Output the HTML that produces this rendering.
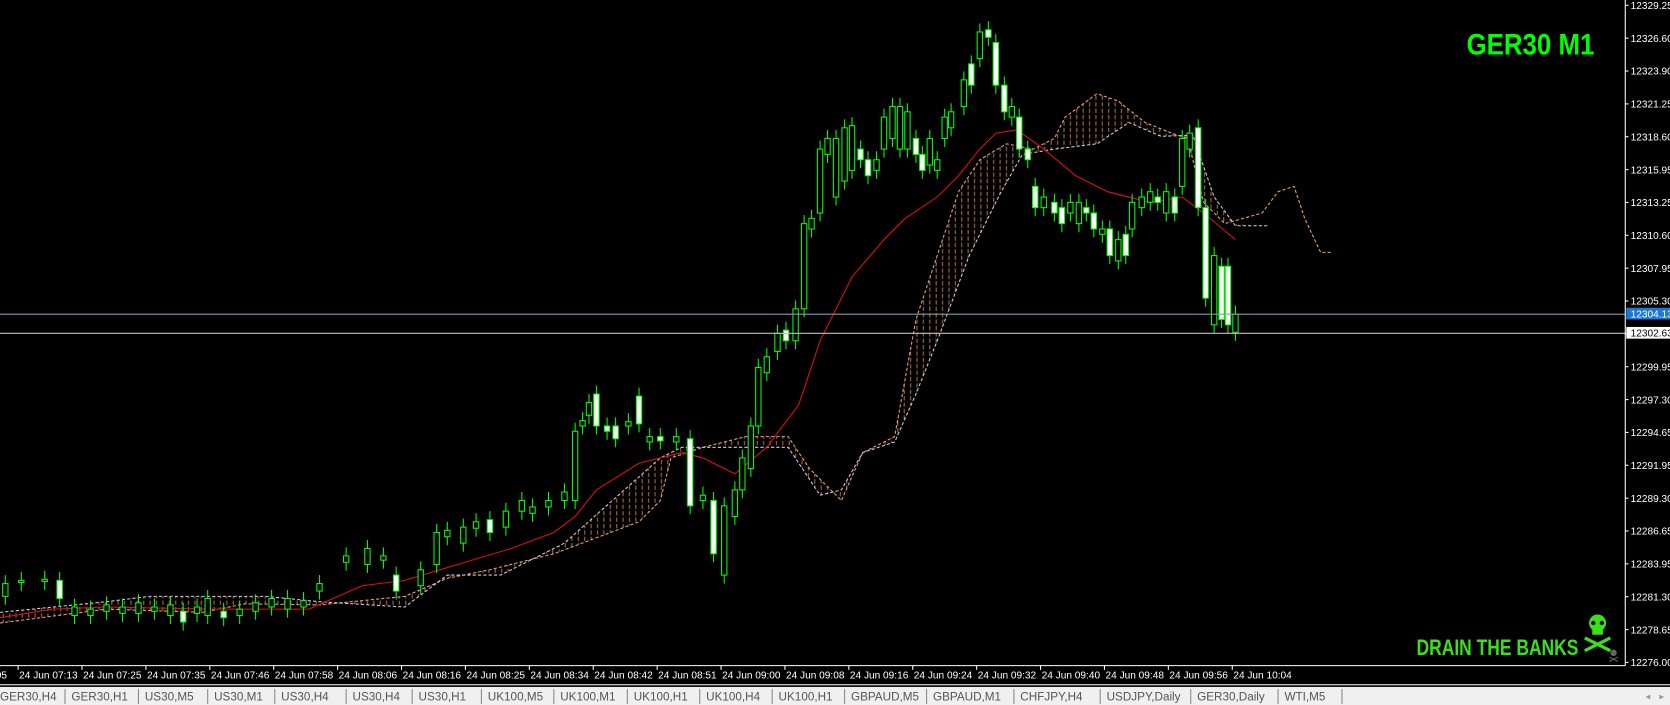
<!DOCTYPE html>
<html><head><meta charset="utf-8"><style>
html,body{margin:0;padding:0;background:#000;overflow:hidden}
svg{display:block}
text{font-family:"Liberation Sans",sans-serif}
</style></head><body>
<svg id="s" width="1670" height="705" viewBox="0 0 1568 662" preserveAspectRatio="none" xmlns="http://www.w3.org/2000/svg">
<defs>
<pattern id="ho" width="6" height="6" patternUnits="userSpaceOnUse"><line x1="3" y1="0" x2="3" y2="4" stroke="#e8a070" stroke-width="1"/></pattern>
<clipPath id="cc"><rect x="0" y="0" width="1526" height="625"/></clipPath>
</defs>
<rect width="1568" height="662" fill="#000"/>
<g id="cloud" clip-path="url(#cc)"></g>
<g id="candles" clip-path="url(#cc)"></g>
<line x1="0" y1="295" x2="1526" y2="295" stroke="#8899aa" stroke-width="1"/>
<line x1="0" y1="313" x2="1526" y2="313" stroke="#c0c0c0" stroke-width="1"/>
<line x1="1526" y1="0" x2="1526" y2="625" stroke="#fff" stroke-width="1"/>
<line x1="0" y1="625" x2="1526" y2="625" stroke="#fff" stroke-width="1"/>
<g id="axis" fill="#fff" font-size="9.5"></g>
<rect x="1527" y="289" width="41" height="11" fill="#1e78d2"/>
<text x="1531" y="298" font-size="9.5" fill="#fff">12304.13</text>
<rect x="1527" y="307" width="41" height="11" fill="#fff"/>
<text x="1531" y="316" font-size="9.5" fill="#000">12302.63</text>
<text x="1377" y="51" font-size="28" font-weight="bold" fill="#00ff00" textLength="120" lengthAdjust="spacingAndGlyphs">GER30 M1</text>
<text x="1330" y="615" font-size="21" font-weight="bold" fill="#3ce01a" textLength="152" lengthAdjust="spacingAndGlyphs">DRAIN THE BANKS</text>
<g fill="#3ce01a">
<ellipse cx="1500" cy="585" rx="8" ry="8"/>
<rect x="1495" y="590" width="10" height="6"/>
<line x1="1488" y1="599" x2="1512" y2="611" stroke="#3ce01a" stroke-width="3"/>
<line x1="1512" y1="599" x2="1488" y2="611" stroke="#3ce01a" stroke-width="3"/>
<circle cx="1496" cy="585" r="2" fill="#000"/><circle cx="1504" cy="585" r="2" fill="#000"/>
</g>
<g fill="#666"><circle cx="1515" cy="613" r="3"/><line x1="1511" y1="617" x2="1519" y2="621" stroke="#666"/><line x1="1519" y1="617" x2="1511" y2="621" stroke="#666"/></g>
<line x1="0" y1="643" x2="1568" y2="643" stroke="#fff" stroke-width="1"/>
<rect x="0" y="645" width="1568" height="17" fill="#f0f0f0"/>
<g id="tabs" font-size="11" fill="#555"></g>
<text x="1545" y="657" font-size="9" fill="#999">◂</text><text x="1558" y="657" font-size="9" fill="#999">▸</text>
</svg>
<script>
var NS="http://www.w3.org/2000/svg";
function el(p,n,a,t){var e=document.createElementNS(NS,n);for(var k in a)e.setAttribute(k,a[k]);if(t)e.textContent=t;document.getElementById(p).appendChild(e);return e;}
// price axis
var pr=["12329.25","12326.60","12323.90","12321.25","12318.60","12315.95","12313.25","12310.60","12307.95","12305.30",null,"12299.95","12297.30","12294.65","12291.95","12289.30","12286.65","12283.95","12281.30","12278.65","12276.00"];
for(var i=0;i<pr.length;i++){var y=5+i*30.85;if(pr[i]){el("axis","text",{x:1531,y:y+3.5},pr[i]);}el("axis","line",{x1:1526,x2:1529,y1:y,y2:y,stroke:"#fff"});}
// time axis
var tl=["07:13","07:25","07:35","07:46","07:58","08:06","08:16","08:25","08:34","08:42","08:51","09:00","09:08","09:16","09:24","09:32","09:40","09:48","09:56","10:04"];
el("axis","text",{x:-4,y:637},"05");
for(var i=0;i<tl.length;i++){var x=17+i*60;el("axis","text",{x:x+1,y:637},"24 Jun "+tl[i]);el("axis","line",{x1:x,x2:x,y1:625,y2:629,stroke:"#fff"});}
// tabs
var tb=["GER30,H4","GER30,H1","US30,M5","US30,M1","US30,H4","US30,H4","US30,H1","UK100,M5","UK100,M1","UK100,H1","UK100,H4","UK100,H1","GBPAUD,M5","GBPAUD,M1","CHFJPY,H4","USDJPY,Daily","GER30,Daily","WTI,M5"];
var sp=[0,61,130,195,258,325,387,452,520,589,657,725,793,870,952,1033,1118,1200,1260];
for(var i=0;i<tb.length;i++){el("tabs","text",{x:sp[i]+(i?6:0),y:658},tb[i]);el("tabs","line",{x1:sp[i+1],x2:sp[i+1],y1:647,y2:661,stroke:"#888"});}
// cloud
var A=[[0,585],[100,572],[190,575],[230,567],[300,568],[380,560],[420,543],[460,535],[520,520],[560,505],[600,490],[620,470],[630,430],[660,420],[700,410],[740,410],[760,440],[790,470],[810,425],[840,410],[860,300],[880,240],[900,180],[920,150],[945,135],[970,140],[990,130],[1000,110],[1030,88],[1050,95],[1075,115],[1100,125],[1115,130],[1130,190],[1150,210],[1185,200],[1200,180],[1215,175],[1225,205],[1240,237],[1250,237]];
var B=[[0,575],[100,565],[140,560],[250,560],[300,565],[380,570],[420,540],[470,540],[530,510],[620,430],[640,420],[700,420],[740,420],[770,465],[790,460],[810,425],[840,415],[860,370],[880,320],[910,240],[940,180],[960,145],[990,140],[1030,135],[1060,115],[1090,128],[1120,127],[1140,185],[1160,212],[1190,212]];
function pts(a){return a.map(function(p){return p.join(",")}).join(" ");}
var poly=A.slice(0,35).concat(B.slice().reverse());
el("cloud","polygon",{points:pts(poly),fill:"url(#ho)",opacity:"0.7"});
el("cloud","polyline",{points:pts(A),fill:"none",stroke:"#f0a070","stroke-width":1,"stroke-dasharray":"3,2"});
el("cloud","polyline",{points:pts(B),fill:"none",stroke:"#d8c8e0","stroke-width":1,"stroke-dasharray":"3,2"});
// MA
var M=[[0,580],[50,572],[100,570],[200,572],[290,572],[340,550],[380,545],[430,530],[480,515],[520,500],[540,485],[560,460],[600,435],[640,425],[660,430],[690,445],[720,420],[750,380],[770,320],[800,260],[830,225],[850,205],[880,185],[900,165],[920,140],[935,125],[955,122],[980,140],[1010,165],[1040,180],[1080,190],[1110,185],[1130,200],[1160,225]];
el("cloud","polyline",{points:pts(M),fill:"none",stroke:"#e01010","stroke-width":1});
// candles [x,top,bottom,white?]
var C=[[5,548,560,0],[20,545,547,0],[42,544,546,0],[56,545,562,1],[70,570,578,0],[85,572,578,0],[100,568,574,0],[115,570,576,0],[130,566,576,0],[145,570,574,0],[160,568,578,0],[172,574,584,1],[185,570,576,0],[195,562,578,0],[210,574,580,1],[225,572,578,0],[240,566,574,0],[255,562,570,0],[270,562,572,0],[285,564,570,0],[300,548,555,0],[325,522,528,0],[345,515,530,0],[360,522,526,0],[372,540,555,1],[395,535,550,0],[410,500,530,0],[420,498,504,0],[435,495,510,0],[447,490,496,0],[460,488,500,1],[475,480,495,0],[490,470,480,0],[500,476,482,0],[515,470,476,0],[530,462,470,0],[540,405,470,0],[547,395,400,0],[553,378,390,0],[560,370,400,1],[570,400,405,1],[578,400,412,1],[590,396,400,0],[600,372,398,1],[610,410,415,0],[620,410,414,1],[635,410,415,0],[648,412,475,1],[660,465,470,0],[670,470,520,1],[680,475,540,0],[690,460,485,0],[697,430,460,0],[705,400,440,0],[712,345,400,0],[720,335,350,0],[730,313,330,0],[738,310,320,1],[747,290,320,0],[755,210,290,0],[762,205,215,0],[770,140,200,0],[777,130,145,0],[785,130,185,0],[793,120,170,0],[800,118,160,0],[808,140,150,1],[815,150,165,1],[823,150,160,0],[830,110,140,0],[838,100,130,0],[845,100,140,0],[852,105,140,0],[860,130,145,1],[866,145,160,1],[873,130,155,0],[880,150,160,0],[887,110,130,0],[893,105,120,0],[905,75,100,0],[912,60,80,1],[920,30,55,0],[928,28,35,1],[935,40,80,1],[943,80,105,1],[950,100,110,0],[957,110,140,1],[965,140,150,1],[972,175,195,1],[980,185,195,0],[990,190,200,1],[997,195,210,1],[1005,190,200,0],[1013,190,210,0],[1020,195,200,1],[1027,200,215,1],[1035,215,220,0],[1042,215,240,1],[1050,225,245,0],[1057,220,240,1],[1063,190,215,0],[1072,185,195,0],[1080,180,190,0],[1087,185,190,1],[1095,180,200,0],[1103,185,200,1],[1110,130,175,0],[1117,125,140,0],[1125,120,195,1],[1132,195,280,1],[1140,240,305,0],[1147,250,300,1],[1153,250,305,1],[1160,295,312,0]];
C.forEach(function(c){
 var x=c[0],t=c[1],b=c[2];
 el("candles","line",{x1:x,x2:x,y1:t-8,y2:b+8,stroke:"#00ff00","stroke-width":1});
 el("candles","rect",{x:x-2.5,y:t,width:5,height:Math.max(2,b-t),fill:c[3]?"#fff":"#000",stroke:"#00ff00","stroke-width":1});
});
</script>
</body></html>
